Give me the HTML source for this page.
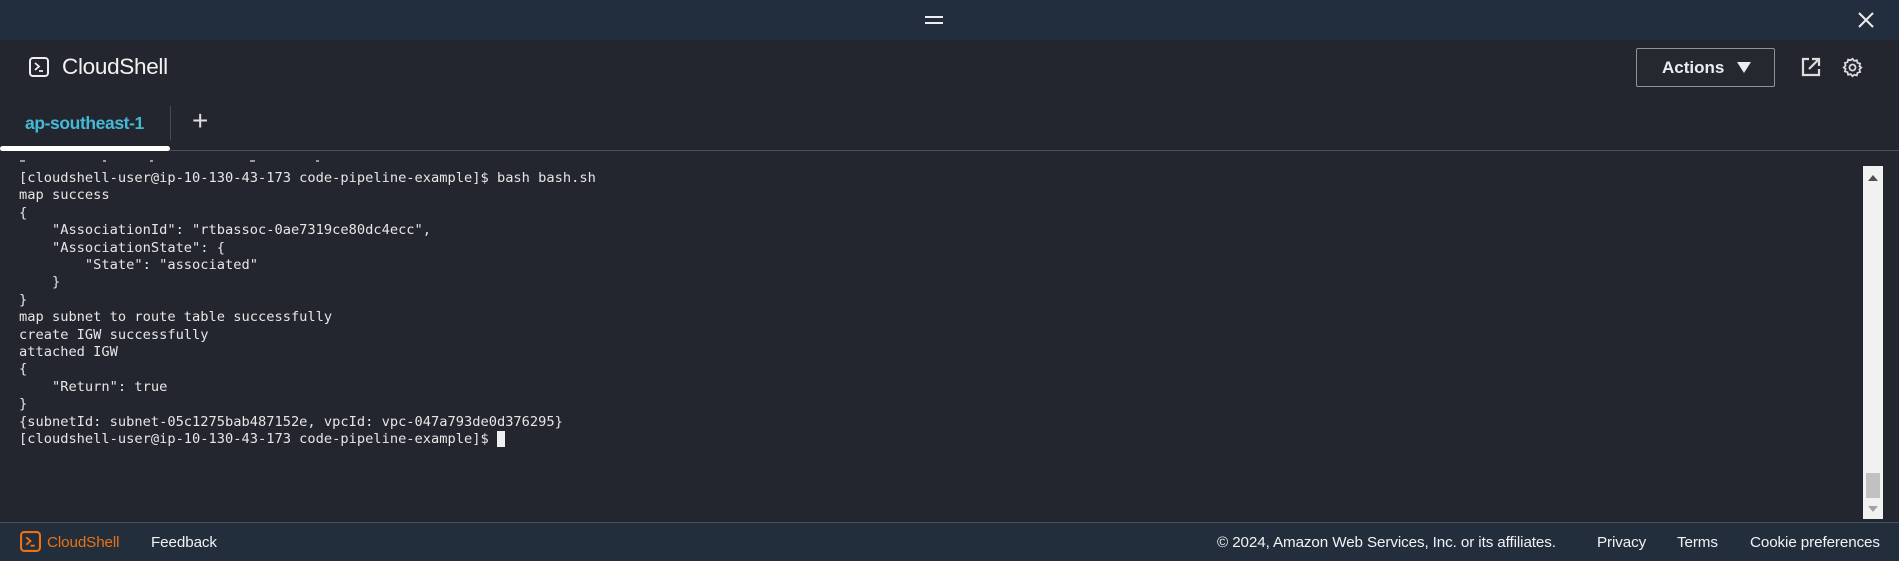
<!DOCTYPE html>
<html><head><meta charset="utf-8"><style>
*{margin:0;padding:0;box-sizing:border-box}
body{width:1899px;height:561px;overflow:hidden;background:#23262e;font-family:"Liberation Sans",sans-serif;position:relative;color:#fff}
.abs{position:absolute}
#top{left:0;top:0;width:1899px;height:40px;background:#222e3e}
#term{left:19px;top:170px;font-family:"DejaVu Sans Mono","Liberation Mono",monospace;font-size:13.7px;line-height:17.4px;color:#e6e6e6;white-space:pre}
#foot{left:0;top:522px;width:1899px;height:39px;background:#232e3d;border-top:1px solid #4a5363;font-size:15.2px}
#foot span{position:absolute;top:11px;letter-spacing:-0.1px}
</style></head><body>
<div id="top" class="abs"></div>
<div class="abs" style="left:925px;top:16px;width:18px;height:2px;background:#eee"></div>
<div class="abs" style="left:925px;top:22px;width:18px;height:2px;background:#eee"></div>
<svg class="abs" style="left:1857px;top:11px" width="18" height="18" viewBox="0 0 18 18"><path d="M2 2L16 16M16 2L2 16" stroke="#eee" stroke-width="2"/></svg>

<svg class="abs" style="left:29px;top:57px" width="20" height="20" viewBox="0 0 20 20"><rect x="1" y="1" width="18" height="18" rx="3" fill="none" stroke="#eee" stroke-width="2"/><path d="M6 6L10 9.5L6 13M10 14H14" fill="none" stroke="#eee" stroke-width="1.8"/></svg>
<div class="abs" style="left:62px;top:54px;font-size:22.5px;color:#f2f2f2;letter-spacing:-0.3px">CloudShell</div>

<div class="abs" style="left:1636px;top:48px;width:139px;height:39px;border:1px solid #8d9399;border-radius:2px;background:#25292f"></div>
<div class="abs" style="left:1662px;top:58px;font-size:17px;font-weight:bold;color:#e8eef5">Actions</div>
<svg class="abs" style="left:1737px;top:62px" width="14" height="11"><path d="M0 0H14L7 11Z" fill="#e8eef5"/></svg>
<svg class="abs" style="left:1801px;top:57px" width="20" height="20" viewBox="0 0 20 20"><path d="M8 2H2V18H18V12" fill="none" stroke="#ddd" stroke-width="2.2"/><path d="M8 12L17 3M11 2H18V9" fill="none" stroke="#ddd" stroke-width="2.2"/></svg>
<svg class="abs" style="left:1842px;top:57px" width="21" height="21" viewBox="0 0 24 24"><path d="M12 2l2 2.5 3-.8.7 3 3 .9-.8 3L22 12l-2.1 2.2.8 3-3 .9-.7 3-3-.8L12 22l-2-2.5-3 .8-.7-3-3-.9.8-3L2 12l2.1-2.2-.8-3 3-.9.7-3 3 .8z" fill="none" stroke="#ddd" stroke-width="2"/><circle cx="12" cy="12" r="3.5" fill="none" stroke="#ddd" stroke-width="2"/></svg>

<div class="abs" style="left:25px;top:113px;font-size:17.5px;font-weight:bold;color:#44b9d6;letter-spacing:-0.4px">ap-southeast-1</div>
<div class="abs" style="left:170px;top:106px;width:1px;height:34px;background:#444b55"></div>
<div class="abs" style="left:192px;top:109px;font-size:28px;line-height:24px;color:#ddd">+</div>
<div class="abs" style="left:0;top:150px;width:1899px;height:1px;background:#495262"></div>
<div class="abs" style="left:0;top:146px;width:170px;height:5px;background:#fff;border-radius:3px"></div>

<div id="term" class="abs">[cloudshell-user@ip-10-130-43-173 code-pipeline-example]$ bash bash.sh
map success
{
    "AssociationId": "rtbassoc-0ae7319ce80dc4ecc",
    "AssociationState": {
        "State": "associated"
    }
}
map subnet to route table successfully
create IGW successfully
attached IGW
{
    "Return": true
}
{subnetId: subnet-05c1275bab487152e, vpcId: vpc-047a793de0d376295}
[cloudshell-user@ip-10-130-43-173 code-pipeline-example]$ <span style="background:#f0f0f0">&nbsp;</span></div>
<div class="abs" style="left:20px;top:160px;width:5px;height:2px;background:#999"></div>
<div class="abs" style="left:103px;top:160px;width:3px;height:2px;background:#999"></div>
<div class="abs" style="left:150px;top:160px;width:3px;height:2px;background:#999"></div>
<div class="abs" style="left:250px;top:160px;width:5px;height:2px;background:#999"></div>
<div class="abs" style="left:316px;top:160px;width:3px;height:2px;background:#999"></div>

<div class="abs" style="left:1863px;top:166px;width:20px;height:353px;background:#f1f1f1"></div>
<svg class="abs" style="left:1868px;top:175px" width="10" height="6"><path d="M0 6L5 0L10 6Z" fill="#505050"/></svg>
<div class="abs" style="left:1866px;top:473px;width:14px;height:25px;background:#c1c1c1"></div>
<svg class="abs" style="left:1868px;top:506px" width="10" height="6"><path d="M0 0L5 6L10 0Z" fill="#a3a3a3"/></svg>

<div id="foot" class="abs">
<svg style="position:absolute;left:20px;top:8px" width="21" height="21" viewBox="0 0 20 20"><rect x="1" y="1" width="18" height="18" rx="3" fill="none" stroke="#ec7211" stroke-width="2"/><path d="M6 6L10 9.5L6 13M10 14H14" fill="none" stroke="#ec7211" stroke-width="1.8"/></svg>
<span style="left:47px;color:#ec7211">CloudShell</span>
<span style="left:151px;color:#f2f2f2">Feedback</span>
<span style="left:1217px;color:#f2f2f2">© 2024, Amazon Web Services, Inc. or its affiliates.</span>
<span style="left:1597px;color:#f2f2f2">Privacy</span>
<span style="left:1677px;color:#f2f2f2">Terms</span>
<span style="left:1750px;color:#f2f2f2">Cookie preferences</span>
</div>
</body></html>
